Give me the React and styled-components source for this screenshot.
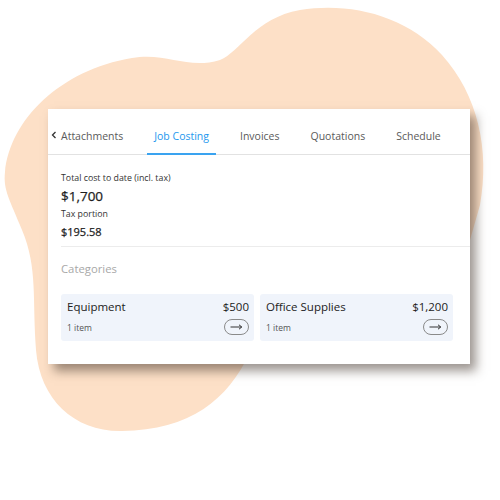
import styled, { createGlobalStyle } from 'styled-components';

const GlobalStyle = createGlobalStyle`
  body {
    margin: 0;
    background: #ffffff;
    font-family: 'Open Sans', 'Liberation Sans', sans-serif;
  }
`;

const StyledStage = styled.div`
  position: relative;
  width: 500px;
  height: 500px;
  overflow: hidden;
  background: #ffffff;
`;

const StyledBlob = styled.svg`
  position: absolute;
  top: 0;
  left: 0;
  width: 500px;
  height: 500px;
  z-index: 0;
`;

const StyledCardWrap = styled.div`
  position: relative;
  z-index: 1;
  padding: 109px 0 0 48px;
`;

const StyledCard = styled.section`
  width: 422px;
  height: 255px;
  background: #ffffff;
  box-shadow: 6px 7px 10px rgba(60, 45, 35, 0.5);
  display: flex;
  flex-direction: column;
`;

const StyledTabs = styled.nav`
  display: flex;
  align-items: stretch;
  height: 45px;
  border-bottom: 1px solid #e2e2e2;
  padding-left: 3px;
`;

const StyledChevron = styled.span`
  display: flex;
  align-items: center;
  padding-top: 7px;
  margin-right: -3px;
`;

const StyledTab = styled.div`
  display: flex;
  align-items: center;
  padding: 10px 7px 0;
  margin-right: ${({ $gap }) => $gap}px;
  font-size: 10.5px;
  color: ${({ $active }) => ($active ? '#1e98ee' : '#5a5a5a')};
  border-bottom: 2px solid ${({ $active }) => ($active ? '#3aa3f0' : 'transparent')};
  margin-bottom: -1px;
  white-space: nowrap;
`;

const StyledBody = styled.div`
  padding: 17px 0 0 13px;
  display: flex;
  flex-direction: column;
`;

const StyledLabel = styled.div`
  font-size: 8.8px;
  color: #333;
  line-height: 12px;
`;

const StyledAmount = styled.div`
  font-size: ${({ $big }) => ($big ? 13.5 : 11)}px;
  font-weight: 500;
  color: #1e1e1e;
  line-height: ${({ $big }) => ($big ? 24 : 18)}px;
  margin-top: ${({ $big }) => ($big ? 0 : 3)}px;
  -webkit-text-stroke: 0.25px #1e1e1e;
`;

const StyledDivider = styled.hr`
  border: none;
  border-top: 1px solid #ececec;
  margin: 5px 0 0;
`;

const StyledSection = styled.div`
  font-size: 11.3px;
  color: #a8a8a8;
  margin-top: 14px;
  line-height: 16px;
`;

const StyledGrid = styled.div`
  display: grid;
  grid-template-columns: 193px 193px;
  gap: 6px;
  margin-top: 17px;
`;

const StyledCategory = styled.div`
  background: #f0f4fb;
  border-radius: 3px;
  padding: 5px 5px 6px 6px;
  display: flex;
  flex-direction: column;
  gap: 4px;
`;

const StyledRow = styled.div`
  display: flex;
  justify-content: space-between;
  align-items: center;
`;

const StyledName = styled.span`
  font-size: 11.5px;
  color: #222;
  line-height: 16px;
`;

const StyledCount = styled.span`
  font-size: 8.5px;
  color: #555;
`;

const StyledArrow = styled.button`
  width: 25px;
  height: 16px;
  border: 1px solid #8a8a8a;
  border-radius: 8px;
  background: transparent;
  padding: 0;
  display: flex;
  align-items: center;
  justify-content: center;
`;

const categories = [
  { name: 'Equipment', amount: '$500', count: '1 item' },
  { name: 'Office Supplies', amount: '$1,200', count: '1 item' },
];

const tabs = [
  { label: 'Attachments', gap: 17 },
  { label: 'Job Costing', gap: 17, active: true },
  { label: 'Invoices', gap: 17 },
  { label: 'Quotations', gap: 17 },
  { label: 'Schedule', gap: 0 },
];

const App = () => {
  return (
    <>
      <GlobalStyle />
      <StyledStage>
        <StyledBlob viewBox="0 0 500 500">
          <path
            fill="#fde0c7"
            d="M5 172 C 10 120, 60 70, 132 58 C 167 52, 187 70, 220 60 C 240 52, 255 18, 300 10 C 350 2, 405 15, 442 55 C 478 95, 490 150, 480 205 L 470 240 L 250 352 C 228 400, 190 430, 122 431 C 75 432, 40 400, 36 350 C 32 300, 38 268, 22 230 C 10 200, 3 190, 5 172 Z"
          />
        </StyledBlob>
        <StyledCardWrap>
          <StyledCard>
            <StyledTabs>
              <StyledChevron>
                <svg width="6" height="8" viewBox="0 0 6 8">
                  <path d="M4.5 1 L1.5 4 L4.5 7" fill="none" stroke="#333" strokeWidth="1.3" />
                </svg>
              </StyledChevron>
              {tabs.map((t) => (
                <StyledTab key={t.label} $active={t.active} $gap={t.gap}>
                  {t.label}
                </StyledTab>
              ))}
            </StyledTabs>
            <StyledBody>
              <StyledLabel>Total cost to date (incl. tax)</StyledLabel>
              <StyledAmount $big>$1,700</StyledAmount>
              <StyledLabel>Tax portion</StyledLabel>
              <StyledAmount>$195.58</StyledAmount>
              <StyledDivider />
              <StyledSection>Categories</StyledSection>
              <StyledGrid>
                {categories.map((c) => (
                  <StyledCategory key={c.name}>
                    <StyledRow>
                      <StyledName>{c.name}</StyledName>
                      <StyledName>{c.amount}</StyledName>
                    </StyledRow>
                    <StyledRow>
                      <StyledCount>{c.count}</StyledCount>
                      <StyledArrow aria-label="Open">
                        <svg width="13" height="6" viewBox="0 0 13 6">
                          <path d="M0.5 3 H11.5 M9 0.8 L11.8 3 L9 5.2" fill="none" stroke="#333" strokeWidth="1" />
                        </svg>
                      </StyledArrow>
                    </StyledRow>
                  </StyledCategory>
                ))}
              </StyledGrid>
            </StyledBody>
          </StyledCard>
        </StyledCardWrap>
      </StyledStage>
    </>
  );
};

export default App;
